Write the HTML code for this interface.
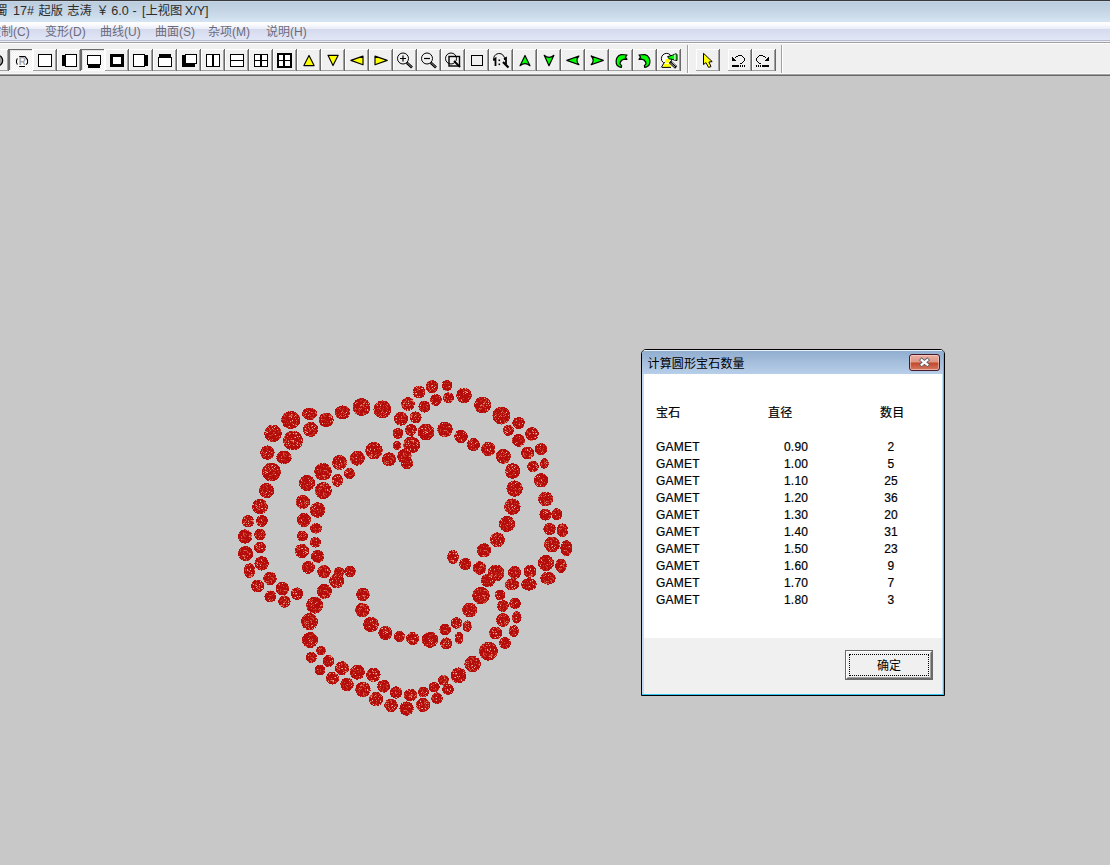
<!DOCTYPE html>
<html><head><meta charset="utf-8"><title>JewelCAD</title>
<style>
html,body{margin:0;padding:0;}
body{width:1110px;height:865px;overflow:hidden;background:#c8c8c8;position:relative;font-family:"Liberation Sans","Noto Sans CJK SC",sans-serif;}
.abs{position:absolute;}
#title{left:0;top:0;width:1110px;height:22px;background:linear-gradient(#bbccdc 2px,#c4d4e4 10px,#d6e4f2 22px);}
#title .top{left:0;top:0;width:1110px;height:1px;background:#3a3a3a;}
#title .top2{left:0;top:1px;width:1110px;height:1px;background:#c5d5e7;}
#title .txt span{position:absolute;top:0}
#title .txt{left:0;top:2.5px;font-size:13px;line-height:17px;color:#2c2c2c;white-space:pre;}
#menu{left:0;top:22px;width:1110px;height:20px;background:linear-gradient(#fff 0,#fdfdff 2px,#e9ecf7 7px,#d5d9ed 7px,#e2e7f7 18px,#b5bcd1 18px,#b5bcd1 19px,#f0f0f4 19px);}
#menu span{position:absolute;top:2px;font-size:12px;line-height:17px;color:#6b6b7b;white-space:pre;}
#tb{left:0;top:42px;width:1110px;height:34px;background:#f0f0f0;}
#tb i{position:absolute;left:0;width:1110px;height:1px;}
#dlg{left:641px;top:349px;width:304px;height:347px;box-sizing:border-box;border:1px solid #000;border-radius:5px 5px 0 0;background:#fff;overflow:hidden;}
#dlg .tbar{left:0;top:0;width:302px;height:24px;background:linear-gradient(#92aecf 0,#a2bcda 10px,#b9d0ea 24px);border-top:1px solid #e8f0f8;box-sizing:border-box;}
#dlg .ttl{left:5.5px;top:5.5px;letter-spacing:.15px;font-size:12px;line-height:16px;color:#000;white-space:pre;}
#dlg .fl{left:0;top:24px;width:2px;height:321px;background:#c3d9f0;}
#dlg .fr{left:300px;top:24px;width:1px;height:321px;background:#bfe3f8;}
#dlg .fr2{left:301px;top:1px;width:1px;height:344px;background:#35c3f2;}
#dlg .fb{left:0;top:344px;width:302px;height:1px;background:#35c3f2;}
#dlg .foot{left:2px;top:288px;width:298px;height:56px;background:#f0f0f0;}
#dlg .t{position:absolute;letter-spacing:.2px;-webkit-text-stroke:.2px #000;font-size:12px;line-height:16px;color:#000;white-space:pre;}
#cls{left:267px;top:4px;width:31px;height:17px;box-sizing:border-box;border:1px solid #47182a;border-radius:3px;background:linear-gradient(#e9b0a2 0,#dd9483 7px,#c3482b 8px,#d27a62 15px);box-shadow:inset 0 0 0 1px rgba(255,220,210,.55);}
#ok{left:203px;top:300px;width:88px;height:30px;box-sizing:border-box;border:1px solid #6a6a6a;background:#f0f0f0;}
#ok .in{left:0;top:0;width:86px;height:28px;box-sizing:border-box;border:1px solid;border-color:#fff #6a6a6a #6a6a6a #fff;}
#ok .in2{left:1px;top:1px;width:84px;height:26px;box-sizing:border-box;border:1px solid;border-color:#f0f0f0 #a0a0a0 #a0a0a0 #f0f0f0;}
#ok .foc{left:3px;top:3px;width:80px;height:22px;box-sizing:border-box;border:1px dotted #000;}
#ok .lbl{left:0;top:7px;width:86px;text-align:center;font-size:12px;line-height:16px;color:#000;}
</style></head><body>
<div id="title" class="abs"><div class="abs top"></div><div class="abs top2"></div><div class="abs txt"><span style="left:-4.5px;font-size:12.2px">蜀</span><span style="left:13px;font-size:12.6px">17#</span><span style="left:38.5px;font-size:12.2px">起版</span><span style="left:67.3px;font-size:12.2px">志涛</span><span style="left:96.5px;font-size:12.2px">￥</span><span style="left:111.2px;font-size:12.6px">6.0</span><span style="left:132.5px;font-size:12.6px">-</span><span style="left:142px;font-size:12.3px">[上视图</span><span style="left:184.8px;font-size:12.6px">X/Y]</span></div></div><div id="menu" class="abs"><span style="left:-11px">控制(C)</span><span style="left:45px">变形(D)</span><span style="left:100px">曲线(U)</span><span style="left:155px">曲面(S)</span><span style="left:208px">杂项(M)</span><span style="left:266px">说明(H)</span></div><div id="tb" class="abs"><i style="top:0;background:#a0a0a0"></i><i style="top:1px;background:#fff"></i><i style="top:31px;background:#fbfbfb"></i><i style="top:32px;background:#a0a0a0"></i><i style="top:33px;background:#696969"></i></div><svg class="abs" style="left:0;top:0" width="1110" height="80" viewBox="0 0 1110 80" shape-rendering="crispEdges"><defs><pattern id="dith" width="2" height="2" patternUnits="userSpaceOnUse"><rect width="2" height="2" fill="#fff"/><rect width="1" height="1" fill="#f0f0f0"/><rect x="1" y="1" width="1" height="1" fill="#f0f0f0"/></pattern></defs><rect x="-15" y="49" width="24" height="22" fill="#f0f0f0"/><rect x="-15" y="49" width="23" height="1" fill="#fff"/><rect x="-15" y="49" width="1" height="21" fill="#fff"/><rect x="7" y="50" width="1" height="20" fill="#a0a0a0"/><rect x="8" y="49" width="1" height="22" fill="#696969"/><rect x="-15" y="70" width="23" height="1" fill="#a0a0a0"/><rect x="9" y="49" width="24" height="22" fill="url(#dith)"/><rect x="9" y="49" width="23" height="1" fill="#696969"/><rect x="9" y="49" width="1" height="21" fill="#696969"/><rect x="10" y="50" width="22" height="1" fill="#e3e3e3"/><rect x="10" y="50" width="1" height="20" fill="#e3e3e3"/><rect x="32" y="49" width="1" height="22" fill="#fff"/><rect x="9" y="70" width="24" height="1" fill="#fff"/><rect x="33" y="49" width="24" height="22" fill="#f0f0f0"/><rect x="33" y="49" width="23" height="1" fill="#fff"/><rect x="33" y="49" width="1" height="21" fill="#fff"/><rect x="55" y="50" width="1" height="20" fill="#a0a0a0"/><rect x="56" y="49" width="1" height="22" fill="#696969"/><rect x="33" y="70" width="23" height="1" fill="#a0a0a0"/><rect x="57" y="49" width="24" height="22" fill="#f0f0f0"/><rect x="57" y="49" width="23" height="1" fill="#fff"/><rect x="57" y="49" width="1" height="21" fill="#fff"/><rect x="79" y="50" width="1" height="20" fill="#a0a0a0"/><rect x="80" y="49" width="1" height="22" fill="#696969"/><rect x="57" y="70" width="23" height="1" fill="#a0a0a0"/><rect x="81" y="49" width="24" height="22" fill="url(#dith)"/><rect x="81" y="49" width="23" height="1" fill="#696969"/><rect x="81" y="49" width="1" height="21" fill="#696969"/><rect x="82" y="50" width="22" height="1" fill="#e3e3e3"/><rect x="82" y="50" width="1" height="20" fill="#e3e3e3"/><rect x="104" y="49" width="1" height="22" fill="#fff"/><rect x="81" y="70" width="24" height="1" fill="#fff"/><rect x="105" y="49" width="24" height="22" fill="#f0f0f0"/><rect x="105" y="49" width="23" height="1" fill="#fff"/><rect x="105" y="49" width="1" height="21" fill="#fff"/><rect x="127" y="50" width="1" height="20" fill="#a0a0a0"/><rect x="128" y="49" width="1" height="22" fill="#696969"/><rect x="105" y="70" width="23" height="1" fill="#a0a0a0"/><rect x="129" y="49" width="24" height="22" fill="#f0f0f0"/><rect x="129" y="49" width="23" height="1" fill="#fff"/><rect x="129" y="49" width="1" height="21" fill="#fff"/><rect x="151" y="50" width="1" height="20" fill="#a0a0a0"/><rect x="152" y="49" width="1" height="22" fill="#696969"/><rect x="129" y="70" width="23" height="1" fill="#a0a0a0"/><rect x="153" y="49" width="24" height="22" fill="#f0f0f0"/><rect x="153" y="49" width="23" height="1" fill="#fff"/><rect x="153" y="49" width="1" height="21" fill="#fff"/><rect x="175" y="50" width="1" height="20" fill="#a0a0a0"/><rect x="176" y="49" width="1" height="22" fill="#696969"/><rect x="153" y="70" width="23" height="1" fill="#a0a0a0"/><rect x="177" y="49" width="24" height="22" fill="#f0f0f0"/><rect x="177" y="49" width="23" height="1" fill="#fff"/><rect x="177" y="49" width="1" height="21" fill="#fff"/><rect x="199" y="50" width="1" height="20" fill="#a0a0a0"/><rect x="200" y="49" width="1" height="22" fill="#696969"/><rect x="177" y="70" width="23" height="1" fill="#a0a0a0"/><rect x="201" y="49" width="24" height="22" fill="#f0f0f0"/><rect x="201" y="49" width="23" height="1" fill="#fff"/><rect x="201" y="49" width="1" height="21" fill="#fff"/><rect x="223" y="50" width="1" height="20" fill="#a0a0a0"/><rect x="224" y="49" width="1" height="22" fill="#696969"/><rect x="201" y="70" width="23" height="1" fill="#a0a0a0"/><rect x="225" y="49" width="24" height="22" fill="#f0f0f0"/><rect x="225" y="49" width="23" height="1" fill="#fff"/><rect x="225" y="49" width="1" height="21" fill="#fff"/><rect x="247" y="50" width="1" height="20" fill="#a0a0a0"/><rect x="248" y="49" width="1" height="22" fill="#696969"/><rect x="225" y="70" width="23" height="1" fill="#a0a0a0"/><rect x="249" y="49" width="24" height="22" fill="#f0f0f0"/><rect x="249" y="49" width="23" height="1" fill="#fff"/><rect x="249" y="49" width="1" height="21" fill="#fff"/><rect x="271" y="50" width="1" height="20" fill="#a0a0a0"/><rect x="272" y="49" width="1" height="22" fill="#696969"/><rect x="249" y="70" width="23" height="1" fill="#a0a0a0"/><rect x="273" y="49" width="24" height="22" fill="#f0f0f0"/><rect x="273" y="49" width="23" height="1" fill="#fff"/><rect x="273" y="49" width="1" height="21" fill="#fff"/><rect x="295" y="50" width="1" height="20" fill="#a0a0a0"/><rect x="296" y="49" width="1" height="22" fill="#696969"/><rect x="273" y="70" width="23" height="1" fill="#a0a0a0"/><rect x="297" y="49" width="24" height="22" fill="#f0f0f0"/><rect x="297" y="49" width="23" height="1" fill="#fff"/><rect x="297" y="49" width="1" height="21" fill="#fff"/><rect x="319" y="50" width="1" height="20" fill="#a0a0a0"/><rect x="320" y="49" width="1" height="22" fill="#696969"/><rect x="297" y="70" width="23" height="1" fill="#a0a0a0"/><rect x="321" y="49" width="24" height="22" fill="#f0f0f0"/><rect x="321" y="49" width="23" height="1" fill="#fff"/><rect x="321" y="49" width="1" height="21" fill="#fff"/><rect x="343" y="50" width="1" height="20" fill="#a0a0a0"/><rect x="344" y="49" width="1" height="22" fill="#696969"/><rect x="321" y="70" width="23" height="1" fill="#a0a0a0"/><rect x="345" y="49" width="24" height="22" fill="#f0f0f0"/><rect x="345" y="49" width="23" height="1" fill="#fff"/><rect x="345" y="49" width="1" height="21" fill="#fff"/><rect x="367" y="50" width="1" height="20" fill="#a0a0a0"/><rect x="368" y="49" width="1" height="22" fill="#696969"/><rect x="345" y="70" width="23" height="1" fill="#a0a0a0"/><rect x="369" y="49" width="24" height="22" fill="#f0f0f0"/><rect x="369" y="49" width="23" height="1" fill="#fff"/><rect x="369" y="49" width="1" height="21" fill="#fff"/><rect x="391" y="50" width="1" height="20" fill="#a0a0a0"/><rect x="392" y="49" width="1" height="22" fill="#696969"/><rect x="369" y="70" width="23" height="1" fill="#a0a0a0"/><rect x="393" y="49" width="24" height="22" fill="#f0f0f0"/><rect x="393" y="49" width="23" height="1" fill="#fff"/><rect x="393" y="49" width="1" height="21" fill="#fff"/><rect x="415" y="50" width="1" height="20" fill="#a0a0a0"/><rect x="416" y="49" width="1" height="22" fill="#696969"/><rect x="393" y="70" width="23" height="1" fill="#a0a0a0"/><rect x="417" y="49" width="24" height="22" fill="#f0f0f0"/><rect x="417" y="49" width="23" height="1" fill="#fff"/><rect x="417" y="49" width="1" height="21" fill="#fff"/><rect x="439" y="50" width="1" height="20" fill="#a0a0a0"/><rect x="440" y="49" width="1" height="22" fill="#696969"/><rect x="417" y="70" width="23" height="1" fill="#a0a0a0"/><rect x="441" y="49" width="24" height="22" fill="#f0f0f0"/><rect x="441" y="49" width="23" height="1" fill="#fff"/><rect x="441" y="49" width="1" height="21" fill="#fff"/><rect x="463" y="50" width="1" height="20" fill="#a0a0a0"/><rect x="464" y="49" width="1" height="22" fill="#696969"/><rect x="441" y="70" width="23" height="1" fill="#a0a0a0"/><rect x="465" y="49" width="24" height="22" fill="#f0f0f0"/><rect x="465" y="49" width="23" height="1" fill="#fff"/><rect x="465" y="49" width="1" height="21" fill="#fff"/><rect x="487" y="50" width="1" height="20" fill="#a0a0a0"/><rect x="488" y="49" width="1" height="22" fill="#696969"/><rect x="465" y="70" width="23" height="1" fill="#a0a0a0"/><rect x="489" y="49" width="24" height="22" fill="#f0f0f0"/><rect x="489" y="49" width="23" height="1" fill="#fff"/><rect x="489" y="49" width="1" height="21" fill="#fff"/><rect x="511" y="50" width="1" height="20" fill="#a0a0a0"/><rect x="512" y="49" width="1" height="22" fill="#696969"/><rect x="489" y="70" width="23" height="1" fill="#a0a0a0"/><rect x="513" y="49" width="24" height="22" fill="#f0f0f0"/><rect x="513" y="49" width="23" height="1" fill="#fff"/><rect x="513" y="49" width="1" height="21" fill="#fff"/><rect x="535" y="50" width="1" height="20" fill="#a0a0a0"/><rect x="536" y="49" width="1" height="22" fill="#696969"/><rect x="513" y="70" width="23" height="1" fill="#a0a0a0"/><rect x="537" y="49" width="24" height="22" fill="#f0f0f0"/><rect x="537" y="49" width="23" height="1" fill="#fff"/><rect x="537" y="49" width="1" height="21" fill="#fff"/><rect x="559" y="50" width="1" height="20" fill="#a0a0a0"/><rect x="560" y="49" width="1" height="22" fill="#696969"/><rect x="537" y="70" width="23" height="1" fill="#a0a0a0"/><rect x="561" y="49" width="24" height="22" fill="#f0f0f0"/><rect x="561" y="49" width="23" height="1" fill="#fff"/><rect x="561" y="49" width="1" height="21" fill="#fff"/><rect x="583" y="50" width="1" height="20" fill="#a0a0a0"/><rect x="584" y="49" width="1" height="22" fill="#696969"/><rect x="561" y="70" width="23" height="1" fill="#a0a0a0"/><rect x="585" y="49" width="24" height="22" fill="#f0f0f0"/><rect x="585" y="49" width="23" height="1" fill="#fff"/><rect x="585" y="49" width="1" height="21" fill="#fff"/><rect x="607" y="50" width="1" height="20" fill="#a0a0a0"/><rect x="608" y="49" width="1" height="22" fill="#696969"/><rect x="585" y="70" width="23" height="1" fill="#a0a0a0"/><rect x="609" y="49" width="24" height="22" fill="#f0f0f0"/><rect x="609" y="49" width="23" height="1" fill="#fff"/><rect x="609" y="49" width="1" height="21" fill="#fff"/><rect x="631" y="50" width="1" height="20" fill="#a0a0a0"/><rect x="632" y="49" width="1" height="22" fill="#696969"/><rect x="609" y="70" width="23" height="1" fill="#a0a0a0"/><rect x="633" y="49" width="24" height="22" fill="#f0f0f0"/><rect x="633" y="49" width="23" height="1" fill="#fff"/><rect x="633" y="49" width="1" height="21" fill="#fff"/><rect x="655" y="50" width="1" height="20" fill="#a0a0a0"/><rect x="656" y="49" width="1" height="22" fill="#696969"/><rect x="633" y="70" width="23" height="1" fill="#a0a0a0"/><rect x="657" y="49" width="24" height="22" fill="#f0f0f0"/><rect x="657" y="49" width="23" height="1" fill="#fff"/><rect x="657" y="49" width="1" height="21" fill="#fff"/><rect x="679" y="50" width="1" height="20" fill="#a0a0a0"/><rect x="680" y="49" width="1" height="22" fill="#696969"/><rect x="657" y="70" width="23" height="1" fill="#a0a0a0"/><rect x="696" y="49" width="24" height="22" fill="#f0f0f0"/><rect x="696" y="49" width="23" height="1" fill="#fff"/><rect x="696" y="49" width="1" height="21" fill="#fff"/><rect x="718" y="50" width="1" height="20" fill="#a0a0a0"/><rect x="719" y="49" width="1" height="22" fill="#696969"/><rect x="696" y="70" width="23" height="1" fill="#a0a0a0"/><rect x="728" y="49" width="24" height="22" fill="#f0f0f0"/><rect x="728" y="49" width="23" height="1" fill="#fff"/><rect x="728" y="49" width="1" height="21" fill="#fff"/><rect x="750" y="50" width="1" height="20" fill="#a0a0a0"/><rect x="751" y="49" width="1" height="22" fill="#696969"/><rect x="728" y="70" width="23" height="1" fill="#a0a0a0"/><rect x="752" y="49" width="24" height="22" fill="#f0f0f0"/><rect x="752" y="49" width="23" height="1" fill="#fff"/><rect x="752" y="49" width="1" height="21" fill="#fff"/><rect x="774" y="50" width="1" height="20" fill="#a0a0a0"/><rect x="775" y="49" width="1" height="22" fill="#696969"/><rect x="752" y="70" width="23" height="1" fill="#a0a0a0"/><rect x="687" y="45" width="1" height="28" fill="#a0a0a0"/><rect x="688" y="45" width="1" height="28" fill="#fff"/><rect x="781" y="45" width="1" height="28" fill="#a0a0a0"/><rect x="782" y="45" width="1" height="28" fill="#fff"/><circle cx="-2.6" cy="60.5" r="5.3" fill="#a0a0a0" stroke="#000" stroke-width="1.2" shape-rendering="auto"/><g shape-rendering="auto"><ellipse cx="22" cy="61.5" rx="5.4" ry="5" fill="#fff"/><path d="M19.2 56.5 H25 L27.5 59.8 V63 L26.2 64.6 M25 66.5 H19.2 M17.4 58.4 L16.5 60.5 V62.5 L17.4 64.6" fill="none" stroke="#000" stroke-width="1.1"/></g><rect x="38" y="54" width="14" height="13" fill="#000"/><rect x="39" y="55" width="12" height="11" fill="#fff"/><rect x="62" y="55" width="4" height="11" fill="#000"/><rect x="65" y="54" width="12" height="13" fill="#000"/><rect x="66" y="55" width="10" height="11" fill="#fff"/><rect x="88" y="64" width="12" height="4" fill="#000"/><rect x="87" y="55" width="14" height="10" fill="#000"/><rect x="88" y="56" width="12" height="8" fill="#fff"/><rect x="110" y="54" width="14" height="13" fill="#000"/><rect x="113" y="57" width="8" height="7" fill="#fff"/><rect x="144" y="55" width="4" height="11" fill="#000"/><rect x="133" y="54" width="12" height="13" fill="#000"/><rect x="134" y="55" width="10" height="11" fill="#fff"/><rect x="159" y="54" width="12" height="4" fill="#000"/><rect x="158" y="57" width="14" height="10" fill="#000"/><rect x="159" y="58" width="12" height="8" fill="#fff"/><rect x="182" y="55" width="13" height="12" fill="#000"/><rect x="185" y="54" width="12" height="10" fill="#000"/><rect x="186" y="55" width="10" height="8" fill="#fff"/><rect x="206" y="54" width="14" height="13" fill="#000"/><rect x="207" y="55" width="12" height="11" fill="#fff"/><rect x="212" y="54" width="2" height="13" fill="#000"/><rect x="230" y="54" width="14" height="13" fill="#000"/><rect x="231" y="55" width="12" height="11" fill="#fff"/><rect x="230" y="60" width="14" height="1" fill="#000"/><rect x="254" y="54" width="14" height="13" fill="#000"/><rect x="255" y="55" width="12" height="11" fill="#fff"/><rect x="260" y="54" width="2" height="13" fill="#000"/><rect x="254" y="60" width="14" height="1" fill="#000"/><rect x="277" y="53" width="15" height="15" fill="#000"/><rect x="279" y="55" width="11" height="11" fill="#fff"/><rect x="283" y="53" width="2" height="15" fill="#000"/><rect x="277" y="60" width="15" height="1" fill="#000"/><polygon shape-rendering="auto" points="309,55.4 314.1,65.6 303.9,65.6" fill="#ffff00" stroke="#000" stroke-width="1.15" stroke-linejoin="round"/><polygon shape-rendering="auto" points="328,55.3 338.2,55.3 333,65.6" fill="#ffff00" stroke="#000" stroke-width="1.15" stroke-linejoin="round"/><polygon shape-rendering="auto" points="350.9,60.4 363,56.1 363,64.8" fill="#ffff00" stroke="#000" stroke-width="1.15" stroke-linejoin="round"/><polygon shape-rendering="auto" points="375,56.1 375,64.8 387.2,60.4" fill="#ffff00" stroke="#000" stroke-width="1.15" stroke-linejoin="round"/><g shape-rendering="auto"><circle cx="403" cy="58.5" r="5.5" fill="none" stroke="#000" stroke-width="1"/><path d="M406.8 62.7 L412 67.5" stroke="#000" stroke-width="2.6"/><path d="M407.4 62.9 L411.6 67.1" stroke="#bbb" stroke-width=".8"/><path d="M400 58.5 H406 M403 55.5 V61.5" stroke="#000" stroke-width="1.2"/></g><g shape-rendering="auto"><circle cx="427" cy="58.5" r="5.5" fill="none" stroke="#000" stroke-width="1"/><path d="M430.8 62.7 L436 67.5" stroke="#000" stroke-width="2.6"/><path d="M431.4 62.9 L435.6 67.1" stroke="#bbb" stroke-width=".8"/><path d="M424 58.5 H430" stroke="#000" stroke-width="1.2"/></g><g shape-rendering="auto"><circle cx="451" cy="58.5" r="5.5" fill="none" stroke="#000" stroke-width="1"/><rect x="449" y="56.5" width="10.5" height="9.5" fill="none" stroke="#000" stroke-width="1.4"/><path d="M454 61 L460 67" stroke="#000" stroke-width="1.8"/></g><rect x="471" y="55" width="12" height="11" fill="#000"/><rect x="472" y="56" width="10" height="9" fill="#f0f0f0"/><g shape-rendering="auto"><path d="M494 61 A5.5 5.5 0 1 1 504.5 60" fill="none" stroke="#000" stroke-width="1"/><path d="M503 62 L508.5 67.5" stroke="#000" stroke-width="2.2"/><path d="M493.5 60 L495.5 58.5 V66 M504 59 L506 58 V64" stroke="#000" stroke-width="1.8" fill="none"/><rect x="498.5" y="59.5" width="1.6" height="1.6" fill="#000"/><rect x="498.5" y="63.5" width="1.6" height="1.6" fill="#000"/></g><path shape-rendering="auto" d="M525 55.4 L530 65.7 Q525 61.6 520 65.7 Z" fill="#00ff00" stroke="#000" stroke-width="1.15" stroke-linejoin="round"/><path shape-rendering="auto" d="M544.2 55.3 Q549 59.4 553.9 55.3 L549 65.7 Z" fill="#00ff00" stroke="#000" stroke-width="1.15" stroke-linejoin="round"/><path shape-rendering="auto" d="M566.8 60.4 L578.9 56 Q575 60.4 578.9 64.7 Z" fill="#00ff00" stroke="#000" stroke-width="1.15" stroke-linejoin="round"/><path shape-rendering="auto" d="M591.2 56 L603.3 60.4 L591.2 64.7 Q595.2 60.4 591.2 56 Z" fill="#00ff00" stroke="#000" stroke-width="1.15" stroke-linejoin="round"/><polygon shape-rendering="auto" points="627.0,55.0 621.3,54.5 618.8,55.6 616.9,57.8 616.2,60.2 616.2,63.0 617.2,65.5 619.2,66.8 621.3,67.3 621.6,65.6 620.0,63.9 620.3,62.0 622.0,60.0 624.4,59.1 627.0,59.3 625.4,57.2" fill="#00ff00" stroke="#000" stroke-width="1.2" stroke-linejoin="round"/><polygon shape-rendering="auto" points="639.0,55.0 644.7,54.5 647.2,55.6 649.1,57.8 649.8,60.2 649.8,63.0 648.8,65.5 646.8,66.8 644.7,67.3 644.4,65.6 646.0,63.9 645.7,62.0 644.0,60.0 641.6,59.1 639.0,59.3 640.6,57.2" fill="#00ff00" stroke="#000" stroke-width="1.2" stroke-linejoin="round"/><g shape-rendering="auto"><circle cx="666.6" cy="58.6" r="5.2" fill="#fff" stroke="#000" stroke-width="1"/><polygon points="665.8,59 668.8,59 670.8,67 662.6,67" fill="#ffff00"/><rect x="663" y="62.8" width="8" height="1" fill="#fff"/><path d="M661.3 67.4 L664.6 62 M662 67.4 H671" stroke="#000" stroke-width="1" fill="none"/><polygon points="667.6,56.6 672.5,55.2 675.6,53.8 677,54.4 677,60.6 675.2,60.2 672.2,59.4 669,58.8" fill="#00ff00" stroke="#000" stroke-width="1"/><rect x="674.3" y="54.5" width="1" height="5.5" fill="#fff"/><path d="M670 61.8 L676.2 67.4" stroke="#000" stroke-width="3.4"/><path d="M670.3 62.9 L675 67.2 M671.6 61.8 L676.4 66.2" stroke="#fff" stroke-width=".7"/></g><polygon shape-rendering="auto" points="703.5,53.3 703.5,64.6 705.9,62.6 708.5,67.4 711,66.6 708.9,62 712.2,61.6" fill="#ffff00" stroke="#000" stroke-width="1" stroke-linejoin="miter"/><rect x="732" y="57" width="1" height="1" fill="#000"/><rect x="732" y="58" width="2" height="1" fill="#000"/><rect x="732" y="59" width="3" height="1" fill="#000"/><rect x="732" y="60" width="4" height="1" fill="#000"/><rect x="735" y="57" width="1" height="1" fill="#000"/><rect x="736" y="56" width="2" height="1" fill="#000"/><rect x="738" y="55" width="4" height="1" fill="#000"/><rect x="742" y="56" width="1" height="1" fill="#000"/><rect x="743" y="57" width="1" height="1" fill="#000"/><rect x="744" y="58" width="1" height="1" fill="#000"/><rect x="744" y="59" width="1" height="1" fill="#000"/><rect x="744" y="60" width="1" height="1" fill="#000"/><rect x="743" y="61" width="1" height="1" fill="#000"/><rect x="742" y="62" width="1" height="1" fill="#000"/><rect x="740" y="63" width="2" height="1" fill="#000"/><rect x="732" y="65" width="7" height="1" fill="#000"/><rect x="732" y="66" width="7" height="1" fill="#000"/><rect x="740" y="65" width="1" height="1" fill="#000"/><rect x="740" y="66" width="1" height="1" fill="#000"/><rect x="742" y="65" width="1" height="1" fill="#000"/><rect x="742" y="66" width="1" height="1" fill="#000"/><rect x="744" y="65" width="1" height="1" fill="#000"/><rect x="744" y="66" width="1" height="1" fill="#000"/><rect x="768" y="57" width="1" height="1" fill="#000"/><rect x="767" y="58" width="2" height="1" fill="#000"/><rect x="766" y="59" width="3" height="1" fill="#000"/><rect x="765" y="60" width="4" height="1" fill="#000"/><rect x="765" y="57" width="1" height="1" fill="#000"/><rect x="763" y="56" width="2" height="1" fill="#000"/><rect x="759" y="55" width="4" height="1" fill="#000"/><rect x="758" y="56" width="1" height="1" fill="#000"/><rect x="757" y="57" width="1" height="1" fill="#000"/><rect x="756" y="58" width="1" height="1" fill="#000"/><rect x="756" y="59" width="1" height="1" fill="#000"/><rect x="756" y="60" width="1" height="1" fill="#000"/><rect x="757" y="61" width="1" height="1" fill="#000"/><rect x="758" y="62" width="1" height="1" fill="#000"/><rect x="759" y="63" width="2" height="1" fill="#000"/><rect x="762" y="65" width="7" height="1" fill="#000"/><rect x="762" y="66" width="7" height="1" fill="#000"/><rect x="760" y="65" width="1" height="1" fill="#000"/><rect x="760" y="66" width="1" height="1" fill="#000"/><rect x="758" y="65" width="1" height="1" fill="#000"/><rect x="758" y="66" width="1" height="1" fill="#000"/><rect x="756" y="65" width="1" height="1" fill="#000"/><rect x="756" y="66" width="1" height="1" fill="#000"/><text x="22.3" y="65.2" font-family="Liberation Sans, sans-serif" font-size="10" font-weight="bold" fill="#a4a4a4" text-anchor="middle" shape-rendering="auto">R</text></svg><svg class="abs" style="left:0;top:76px" width="640" height="789" viewBox="0 76 640 789" shape-rendering="crispEdges"><defs><pattern id="sp" width="40" height="40" patternUnits="userSpaceOnUse"><rect width="40" height="40" fill="#b50d0b"/><rect x="20" y="9" width="1" height="1" fill="#c84a30"/><rect x="3" y="4" width="1" height="1" fill="#be2a1c"/><rect x="6" y="23" width="1" height="1" fill="#c43a28"/><rect x="3" y="32" width="1" height="1" fill="#c23222"/><rect x="2" y="5" width="1" height="1" fill="#c84a30"/><rect x="26" y="4" width="1" height="1" fill="#c23222"/><rect x="5" y="35" width="1" height="1" fill="#c84a30"/><rect x="3" y="36" width="1" height="1" fill="#c8402e"/><rect x="14" y="37" width="1" height="1" fill="#d0604a"/><rect x="36" y="37" width="1" height="1" fill="#c84a30"/><rect x="3" y="14" width="1" height="1" fill="#d0604a"/><rect x="35" y="8" width="1" height="1" fill="#d87a62"/><rect x="26" y="9" width="1" height="1" fill="#be2a1c"/><rect x="7" y="36" width="1" height="1" fill="#d87a62"/><rect x="35" y="11" width="1" height="1" fill="#c8402e"/><rect x="37" y="36" width="1" height="1" fill="#c23222"/><rect x="23" y="6" width="1" height="1" fill="#be2a1c"/><rect x="4" y="36" width="1" height="1" fill="#d0604a"/><rect x="39" y="13" width="1" height="1" fill="#cc5038"/><rect x="34" y="27" width="1" height="1" fill="#ecc0b0"/><rect x="29" y="37" width="1" height="1" fill="#cc5038"/><rect x="23" y="19" width="1" height="1" fill="#c23222"/><rect x="11" y="15" width="1" height="1" fill="#c8402e"/><rect x="36" y="19" width="1" height="1" fill="#be2a1c"/><rect x="31" y="21" width="1" height="1" fill="#cc5038"/><rect x="18" y="38" width="1" height="1" fill="#c8402e"/><rect x="7" y="32" width="1" height="1" fill="#c84a30"/><rect x="10" y="21" width="1" height="1" fill="#e09a84"/><rect x="31" y="26" width="1" height="1" fill="#d0604a"/><rect x="4" y="35" width="1" height="1" fill="#c43a28"/><rect x="20" y="21" width="1" height="1" fill="#ecc0b0"/><rect x="38" y="31" width="1" height="1" fill="#c43a28"/><rect x="29" y="4" width="1" height="1" fill="#c8402e"/><rect x="17" y="30" width="1" height="1" fill="#c8402e"/><rect x="3" y="19" width="1" height="1" fill="#c43a28"/><rect x="28" y="18" width="1" height="1" fill="#c84a30"/><rect x="22" y="1" width="1" height="1" fill="#cc5038"/><rect x="22" y="10" width="1" height="1" fill="#c43a28"/><rect x="7" y="31" width="1" height="1" fill="#d0604a"/><rect x="13" y="18" width="1" height="1" fill="#e09a84"/><rect x="15" y="25" width="1" height="1" fill="#c84a30"/><rect x="31" y="5" width="1" height="1" fill="#e09a84"/><rect x="28" y="25" width="1" height="1" fill="#be2a1c"/><rect x="17" y="8" width="1" height="1" fill="#c84a30"/><rect x="35" y="17" width="1" height="1" fill="#c84a30"/><rect x="22" y="24" width="1" height="1" fill="#c23222"/><rect x="9" y="5" width="1" height="1" fill="#e09a84"/><rect x="9" y="14" width="1" height="1" fill="#c23222"/><rect x="0" y="31" width="1" height="1" fill="#c43a28"/><rect x="11" y="16" width="1" height="1" fill="#d87a62"/><rect x="0" y="9" width="1" height="1" fill="#c84a30"/><rect x="34" y="23" width="1" height="1" fill="#c43a28"/><rect x="36" y="20" width="1" height="1" fill="#e09a84"/><rect x="32" y="39" width="1" height="1" fill="#d0604a"/><rect x="29" y="35" width="1" height="1" fill="#c84a30"/><rect x="25" y="25" width="1" height="1" fill="#c84a30"/><rect x="6" y="30" width="1" height="1" fill="#c84a30"/><rect x="3" y="12" width="1" height="1" fill="#c8402e"/><rect x="13" y="28" width="1" height="1" fill="#e09a84"/><rect x="7" y="21" width="1" height="1" fill="#c43a28"/><rect x="3" y="6" width="1" height="1" fill="#d0604a"/><rect x="36" y="9" width="1" height="1" fill="#be2a1c"/><rect x="6" y="23" width="1" height="1" fill="#c43a28"/><rect x="1" y="4" width="1" height="1" fill="#c23222"/><rect x="39" y="24" width="1" height="1" fill="#e09a84"/><rect x="16" y="22" width="1" height="1" fill="#c43a28"/><rect x="23" y="30" width="1" height="1" fill="#c8402e"/><rect x="7" y="31" width="1" height="1" fill="#cc5038"/><rect x="30" y="30" width="1" height="1" fill="#d87a62"/><rect x="5" y="9" width="1" height="1" fill="#c8402e"/><rect x="21" y="16" width="1" height="1" fill="#cc5038"/><rect x="10" y="33" width="1" height="1" fill="#d0604a"/><rect x="13" y="33" width="1" height="1" fill="#ecc0b0"/><rect x="9" y="34" width="1" height="1" fill="#d0604a"/><rect x="33" y="19" width="1" height="1" fill="#c8402e"/><rect x="16" y="33" width="1" height="1" fill="#ecc0b0"/><rect x="10" y="22" width="1" height="1" fill="#c23222"/><rect x="34" y="34" width="1" height="1" fill="#be2a1c"/><rect x="21" y="14" width="1" height="1" fill="#c43a28"/><rect x="12" y="15" width="1" height="1" fill="#c84a30"/><rect x="14" y="12" width="1" height="1" fill="#be2a1c"/><rect x="31" y="22" width="1" height="1" fill="#d0604a"/><rect x="1" y="17" width="1" height="1" fill="#cc5038"/><rect x="16" y="12" width="1" height="1" fill="#c43a28"/><rect x="22" y="28" width="1" height="1" fill="#ecc0b0"/><rect x="23" y="5" width="1" height="1" fill="#c23222"/><rect x="6" y="14" width="1" height="1" fill="#cc5038"/><rect x="12" y="21" width="1" height="1" fill="#c23222"/><rect x="30" y="39" width="1" height="1" fill="#c43a28"/><rect x="0" y="30" width="1" height="1" fill="#ecc0b0"/><rect x="5" y="7" width="1" height="1" fill="#c84a30"/><rect x="12" y="30" width="1" height="1" fill="#e09a84"/><rect x="27" y="21" width="1" height="1" fill="#c8402e"/><rect x="25" y="29" width="1" height="1" fill="#c84a30"/><rect x="5" y="10" width="1" height="1" fill="#e09a84"/><rect x="8" y="1" width="1" height="1" fill="#e09a84"/><rect x="37" y="29" width="1" height="1" fill="#e09a84"/><rect x="39" y="38" width="1" height="1" fill="#cc5038"/><rect x="22" y="9" width="1" height="1" fill="#be2a1c"/><rect x="35" y="8" width="1" height="1" fill="#d0604a"/><rect x="0" y="6" width="1" height="1" fill="#be2a1c"/><rect x="8" y="27" width="1" height="1" fill="#c23222"/><rect x="13" y="1" width="1" height="1" fill="#d87a62"/><rect x="13" y="18" width="1" height="1" fill="#be2a1c"/><rect x="15" y="37" width="1" height="1" fill="#ecc0b0"/><rect x="16" y="34" width="1" height="1" fill="#c84a30"/><rect x="8" y="3" width="1" height="1" fill="#ecc0b0"/><rect x="29" y="37" width="1" height="1" fill="#be2a1c"/><rect x="26" y="32" width="1" height="1" fill="#e09a84"/><rect x="34" y="9" width="1" height="1" fill="#be2a1c"/><rect x="32" y="1" width="1" height="1" fill="#cc5038"/><rect x="11" y="38" width="1" height="1" fill="#d0604a"/><rect x="9" y="11" width="1" height="1" fill="#e09a84"/><rect x="30" y="39" width="1" height="1" fill="#c8402e"/><rect x="35" y="3" width="1" height="1" fill="#ecc0b0"/><rect x="33" y="33" width="1" height="1" fill="#be2a1c"/><rect x="30" y="6" width="1" height="1" fill="#be2a1c"/><rect x="3" y="15" width="1" height="1" fill="#c23222"/><rect x="17" y="2" width="1" height="1" fill="#c8402e"/><rect x="32" y="28" width="1" height="1" fill="#be2a1c"/><rect x="1" y="4" width="1" height="1" fill="#cc5038"/><rect x="20" y="39" width="1" height="1" fill="#be2a1c"/><rect x="38" y="32" width="1" height="1" fill="#c23222"/><rect x="17" y="28" width="1" height="1" fill="#be2a1c"/><rect x="34" y="30" width="1" height="1" fill="#be2a1c"/><rect x="15" y="33" width="1" height="1" fill="#d87a62"/><rect x="35" y="12" width="1" height="1" fill="#cc5038"/><rect x="8" y="26" width="1" height="1" fill="#c8402e"/><rect x="25" y="28" width="1" height="1" fill="#ecc0b0"/><rect x="4" y="15" width="1" height="1" fill="#c84a30"/><rect x="4" y="13" width="1" height="1" fill="#d87a62"/><rect x="7" y="9" width="1" height="1" fill="#ecc0b0"/><rect x="9" y="16" width="1" height="1" fill="#e09a84"/><rect x="29" y="14" width="1" height="1" fill="#c8402e"/><rect x="25" y="31" width="1" height="1" fill="#e09a84"/><rect x="14" y="10" width="1" height="1" fill="#c84a30"/><rect x="32" y="25" width="1" height="1" fill="#ecc0b0"/><rect x="26" y="12" width="1" height="1" fill="#ecc0b0"/><rect x="20" y="5" width="1" height="1" fill="#ecc0b0"/><rect x="1" y="21" width="1" height="1" fill="#be2a1c"/><rect x="29" y="28" width="1" height="1" fill="#d0604a"/><rect x="24" y="21" width="1" height="1" fill="#be2a1c"/><rect x="39" y="18" width="1" height="1" fill="#be2a1c"/><rect x="4" y="7" width="1" height="1" fill="#c23222"/><rect x="6" y="5" width="1" height="1" fill="#d87a62"/><rect x="17" y="2" width="1" height="1" fill="#e09a84"/><rect x="17" y="8" width="1" height="1" fill="#c84a30"/><rect x="16" y="25" width="1" height="1" fill="#e09a84"/><rect x="34" y="32" width="1" height="1" fill="#c43a28"/><rect x="31" y="20" width="1" height="1" fill="#c8402e"/><rect x="17" y="3" width="1" height="1" fill="#e09a84"/><rect x="27" y="4" width="1" height="1" fill="#d87a62"/><rect x="1" y="5" width="1" height="1" fill="#d87a62"/><rect x="5" y="38" width="1" height="1" fill="#c23222"/><rect x="4" y="16" width="1" height="1" fill="#c8402e"/><rect x="29" y="0" width="1" height="1" fill="#ecc0b0"/><rect x="35" y="26" width="1" height="1" fill="#d87a62"/><rect x="39" y="8" width="1" height="1" fill="#d0604a"/><rect x="33" y="15" width="1" height="1" fill="#c8402e"/><rect x="10" y="16" width="1" height="1" fill="#d0604a"/><rect x="11" y="12" width="1" height="1" fill="#d87a62"/><rect x="19" y="33" width="1" height="1" fill="#c23222"/><rect x="18" y="28" width="1" height="1" fill="#be2a1c"/><rect x="11" y="17" width="1" height="1" fill="#ecc0b0"/><rect x="1" y="16" width="1" height="1" fill="#d0604a"/><rect x="0" y="1" width="1" height="1" fill="#be2a1c"/><rect x="35" y="12" width="1" height="1" fill="#be2a1c"/><rect x="30" y="15" width="1" height="1" fill="#cc5038"/><rect x="6" y="27" width="1" height="1" fill="#cc5038"/><rect x="34" y="25" width="1" height="1" fill="#be2a1c"/><rect x="19" y="13" width="1" height="1" fill="#c23222"/><rect x="21" y="12" width="1" height="1" fill="#e09a84"/><rect x="25" y="22" width="1" height="1" fill="#d0604a"/><rect x="8" y="0" width="1" height="1" fill="#c8402e"/><rect x="16" y="27" width="1" height="1" fill="#e09a84"/><rect x="3" y="5" width="1" height="1" fill="#c84a30"/><rect x="32" y="18" width="1" height="1" fill="#c43a28"/><rect x="15" y="18" width="1" height="1" fill="#d0604a"/><rect x="29" y="11" width="1" height="1" fill="#e09a84"/><rect x="17" y="28" width="1" height="1" fill="#d0604a"/><rect x="16" y="23" width="1" height="1" fill="#ecc0b0"/><rect x="35" y="20" width="1" height="1" fill="#c23222"/><rect x="2" y="19" width="1" height="1" fill="#c23222"/><rect x="22" y="11" width="1" height="1" fill="#d0604a"/><rect x="21" y="24" width="1" height="1" fill="#c8402e"/><rect x="30" y="17" width="1" height="1" fill="#be2a1c"/><rect x="12" y="15" width="1" height="1" fill="#be2a1c"/><rect x="0" y="5" width="1" height="1" fill="#d87a62"/><rect x="5" y="9" width="1" height="1" fill="#c84a30"/><rect x="37" y="2" width="1" height="1" fill="#c84a30"/><rect x="1" y="19" width="1" height="1" fill="#d87a62"/><rect x="14" y="5" width="1" height="1" fill="#c43a28"/><rect x="33" y="9" width="1" height="1" fill="#c43a28"/><rect x="24" y="20" width="1" height="1" fill="#cc5038"/><rect x="9" y="18" width="1" height="1" fill="#c43a28"/><rect x="9" y="2" width="1" height="1" fill="#be2a1c"/><rect x="27" y="32" width="1" height="1" fill="#e09a84"/><rect x="33" y="32" width="1" height="1" fill="#c43a28"/><rect x="1" y="37" width="1" height="1" fill="#c23222"/><rect x="5" y="1" width="1" height="1" fill="#d0604a"/><rect x="8" y="23" width="1" height="1" fill="#c8402e"/><rect x="24" y="28" width="1" height="1" fill="#be2a1c"/><rect x="3" y="1" width="1" height="1" fill="#be2a1c"/><rect x="15" y="31" width="1" height="1" fill="#d87a62"/><rect x="0" y="29" width="1" height="1" fill="#c8402e"/><rect x="32" y="34" width="1" height="1" fill="#c8402e"/><rect x="33" y="4" width="1" height="1" fill="#cc5038"/><rect x="16" y="4" width="1" height="1" fill="#d87a62"/><rect x="15" y="13" width="1" height="1" fill="#c23222"/><rect x="29" y="31" width="1" height="1" fill="#c84a30"/><rect x="4" y="30" width="1" height="1" fill="#d87a62"/><rect x="2" y="39" width="1" height="1" fill="#c23222"/><rect x="4" y="38" width="1" height="1" fill="#e09a84"/><rect x="21" y="16" width="1" height="1" fill="#d87a62"/><rect x="39" y="36" width="1" height="1" fill="#e09a84"/><rect x="0" y="30" width="1" height="1" fill="#d0604a"/><rect x="31" y="17" width="1" height="1" fill="#c8402e"/><rect x="13" y="31" width="1" height="1" fill="#d87a62"/><rect x="33" y="18" width="1" height="1" fill="#cc5038"/><rect x="29" y="29" width="1" height="1" fill="#c8402e"/><rect x="35" y="12" width="1" height="1" fill="#d87a62"/><rect x="5" y="30" width="1" height="1" fill="#d0604a"/><rect x="18" y="29" width="1" height="1" fill="#c8402e"/><rect x="32" y="28" width="1" height="1" fill="#d87a62"/><rect x="24" y="13" width="1" height="1" fill="#c23222"/><rect x="4" y="37" width="1" height="1" fill="#c8402e"/><rect x="9" y="33" width="1" height="1" fill="#d87a62"/><rect x="23" y="8" width="1" height="1" fill="#c43a28"/><rect x="32" y="17" width="1" height="1" fill="#c8402e"/><rect x="23" y="14" width="1" height="1" fill="#cc5038"/><rect x="31" y="25" width="1" height="1" fill="#d0604a"/><rect x="10" y="0" width="1" height="1" fill="#cc5038"/><rect x="28" y="25" width="1" height="1" fill="#d87a62"/><rect x="9" y="26" width="1" height="1" fill="#ecc0b0"/><rect x="24" y="20" width="1" height="1" fill="#c8402e"/><rect x="21" y="0" width="1" height="1" fill="#ecc0b0"/><rect x="21" y="25" width="1" height="1" fill="#c8402e"/><rect x="12" y="0" width="1" height="1" fill="#d87a62"/><rect x="16" y="23" width="1" height="1" fill="#c8402e"/><rect x="25" y="24" width="1" height="1" fill="#c43a28"/><rect x="4" y="23" width="1" height="1" fill="#c84a30"/><rect x="17" y="3" width="1" height="1" fill="#d87a62"/><rect x="6" y="3" width="1" height="1" fill="#d87a62"/><rect x="9" y="15" width="1" height="1" fill="#d87a62"/><rect x="27" y="32" width="1" height="1" fill="#ecc0b0"/><rect x="12" y="23" width="1" height="1" fill="#c84a30"/><rect x="1" y="25" width="1" height="1" fill="#be2a1c"/><rect x="35" y="13" width="1" height="1" fill="#c8402e"/><rect x="3" y="26" width="1" height="1" fill="#cc5038"/><rect x="39" y="8" width="1" height="1" fill="#d87a62"/><rect x="31" y="3" width="1" height="1" fill="#be2a1c"/><rect x="8" y="10" width="1" height="1" fill="#cc5038"/><rect x="26" y="21" width="1" height="1" fill="#d87a62"/><rect x="19" y="16" width="1" height="1" fill="#d87a62"/><rect x="25" y="15" width="1" height="1" fill="#d87a62"/><rect x="30" y="35" width="1" height="1" fill="#c84a30"/><rect x="7" y="10" width="1" height="1" fill="#e09a84"/><rect x="4" y="13" width="1" height="1" fill="#be2a1c"/><rect x="31" y="35" width="1" height="1" fill="#c23222"/><rect x="28" y="21" width="1" height="1" fill="#cc5038"/><rect x="27" y="8" width="1" height="1" fill="#be2a1c"/><rect x="12" y="15" width="1" height="1" fill="#c8402e"/><rect x="11" y="21" width="1" height="1" fill="#be2a1c"/><rect x="5" y="20" width="1" height="1" fill="#c23222"/><rect x="23" y="16" width="1" height="1" fill="#c43a28"/><rect x="12" y="1" width="1" height="1" fill="#c84a30"/><rect x="24" y="26" width="1" height="1" fill="#be2a1c"/><rect x="13" y="24" width="1" height="1" fill="#d87a62"/><rect x="21" y="3" width="1" height="1" fill="#cc5038"/><rect x="17" y="36" width="1" height="1" fill="#ecc0b0"/><rect x="8" y="32" width="1" height="1" fill="#be2a1c"/><rect x="13" y="5" width="1" height="1" fill="#d87a62"/><rect x="15" y="24" width="1" height="1" fill="#c84a30"/><rect x="28" y="27" width="1" height="1" fill="#d87a62"/><rect x="1" y="8" width="1" height="1" fill="#d0604a"/><rect x="27" y="30" width="1" height="1" fill="#c43a28"/><rect x="31" y="0" width="1" height="1" fill="#c8402e"/><rect x="25" y="33" width="1" height="1" fill="#cc5038"/><rect x="28" y="15" width="1" height="1" fill="#c8402e"/><rect x="14" y="9" width="1" height="1" fill="#e09a84"/><rect x="33" y="6" width="1" height="1" fill="#cc5038"/><rect x="5" y="35" width="1" height="1" fill="#d0604a"/><rect x="0" y="8" width="1" height="1" fill="#c23222"/><rect x="36" y="2" width="1" height="1" fill="#d87a62"/><rect x="8" y="16" width="1" height="1" fill="#be2a1c"/><rect x="27" y="7" width="1" height="1" fill="#c8402e"/><rect x="4" y="19" width="1" height="1" fill="#be2a1c"/><rect x="37" y="12" width="1" height="1" fill="#c84a30"/><rect x="16" y="14" width="1" height="1" fill="#c43a28"/><rect x="0" y="0" width="1" height="1" fill="#be2a1c"/><rect x="19" y="29" width="1" height="1" fill="#d87a62"/><rect x="20" y="15" width="1" height="1" fill="#cc5038"/><rect x="33" y="15" width="1" height="1" fill="#be2a1c"/><rect x="15" y="1" width="1" height="1" fill="#c84a30"/><rect x="19" y="3" width="1" height="1" fill="#d0604a"/><rect x="12" y="31" width="1" height="1" fill="#c84a30"/><rect x="5" y="16" width="1" height="1" fill="#c23222"/><rect x="27" y="23" width="1" height="1" fill="#c23222"/><rect x="31" y="2" width="1" height="1" fill="#ecc0b0"/><rect x="26" y="23" width="1" height="1" fill="#c84a30"/><rect x="12" y="0" width="1" height="1" fill="#d87a62"/><rect x="32" y="4" width="1" height="1" fill="#c23222"/><rect x="31" y="12" width="1" height="1" fill="#d87a62"/><rect x="12" y="14" width="1" height="1" fill="#cc5038"/><rect x="14" y="16" width="1" height="1" fill="#d87a62"/><rect x="6" y="39" width="1" height="1" fill="#cc5038"/><rect x="39" y="11" width="1" height="1" fill="#c23222"/><rect x="31" y="26" width="1" height="1" fill="#d0604a"/><rect x="38" y="9" width="1" height="1" fill="#c84a30"/><rect x="3" y="13" width="1" height="1" fill="#d0604a"/><rect x="38" y="9" width="1" height="1" fill="#c84a30"/><rect x="3" y="3" width="1" height="1" fill="#e09a84"/><rect x="25" y="28" width="1" height="1" fill="#ecc0b0"/><rect x="7" y="5" width="1" height="1" fill="#e09a84"/><rect x="21" y="12" width="1" height="1" fill="#e09a84"/><rect x="33" y="29" width="1" height="1" fill="#d0604a"/><rect x="19" y="24" width="1" height="1" fill="#ecc0b0"/><rect x="21" y="28" width="1" height="1" fill="#e09a84"/><rect x="6" y="0" width="1" height="1" fill="#c8402e"/><rect x="17" y="5" width="1" height="1" fill="#ecc0b0"/><rect x="26" y="7" width="1" height="1" fill="#be2a1c"/><rect x="13" y="24" width="1" height="1" fill="#ecc0b0"/><rect x="19" y="27" width="1" height="1" fill="#c8402e"/><rect x="3" y="30" width="1" height="1" fill="#c23222"/><rect x="23" y="34" width="1" height="1" fill="#cc5038"/><rect x="12" y="20" width="1" height="1" fill="#ecc0b0"/><rect x="30" y="1" width="1" height="1" fill="#c84a30"/><rect x="15" y="25" width="1" height="1" fill="#d0604a"/><rect x="24" y="2" width="1" height="1" fill="#cc5038"/><rect x="4" y="3" width="1" height="1" fill="#d87a62"/><rect x="12" y="4" width="1" height="1" fill="#c43a28"/><rect x="21" y="23" width="1" height="1" fill="#d87a62"/><rect x="21" y="39" width="1" height="1" fill="#d0604a"/><rect x="16" y="20" width="1" height="1" fill="#d87a62"/><rect x="19" y="0" width="1" height="1" fill="#c43a28"/><rect x="4" y="1" width="1" height="1" fill="#c23222"/><rect x="6" y="30" width="1" height="1" fill="#cc5038"/><rect x="24" y="16" width="1" height="1" fill="#c84a30"/><rect x="31" y="8" width="1" height="1" fill="#cc5038"/><rect x="11" y="0" width="1" height="1" fill="#d87a62"/><rect x="9" y="38" width="1" height="1" fill="#c23222"/><rect x="20" y="20" width="1" height="1" fill="#cc5038"/><rect x="23" y="38" width="1" height="1" fill="#c8402e"/><rect x="32" y="12" width="1" height="1" fill="#c84a30"/><rect x="10" y="15" width="1" height="1" fill="#c84a30"/><rect x="4" y="2" width="1" height="1" fill="#cc5038"/><rect x="35" y="34" width="1" height="1" fill="#ecc0b0"/><rect x="10" y="27" width="1" height="1" fill="#c8402e"/><rect x="4" y="16" width="1" height="1" fill="#c43a28"/><rect x="5" y="13" width="1" height="1" fill="#c8402e"/><rect x="26" y="31" width="1" height="1" fill="#cc5038"/><rect x="11" y="14" width="1" height="1" fill="#e09a84"/><rect x="26" y="29" width="1" height="1" fill="#c43a28"/><rect x="15" y="34" width="1" height="1" fill="#c8402e"/><rect x="18" y="18" width="1" height="1" fill="#d87a62"/><rect x="36" y="17" width="1" height="1" fill="#ecc0b0"/><rect x="16" y="16" width="1" height="1" fill="#c23222"/><rect x="28" y="15" width="1" height="1" fill="#e09a84"/><rect x="15" y="15" width="1" height="1" fill="#e09a84"/><rect x="18" y="37" width="1" height="1" fill="#c23222"/><rect x="20" y="4" width="1" height="1" fill="#c84a30"/><rect x="16" y="15" width="1" height="1" fill="#be2a1c"/><rect x="33" y="14" width="1" height="1" fill="#c8402e"/><rect x="29" y="2" width="1" height="1" fill="#c8402e"/><rect x="0" y="30" width="1" height="1" fill="#c23222"/><rect x="28" y="23" width="1" height="1" fill="#d0604a"/><rect x="18" y="14" width="1" height="1" fill="#c8402e"/><rect x="3" y="12" width="1" height="1" fill="#c43a28"/><rect x="37" y="12" width="1" height="1" fill="#c8402e"/><rect x="23" y="32" width="1" height="1" fill="#e09a84"/><rect x="28" y="38" width="1" height="1" fill="#d87a62"/><rect x="0" y="6" width="1" height="1" fill="#c43a28"/><rect x="39" y="22" width="1" height="1" fill="#c23222"/><rect x="2" y="23" width="1" height="1" fill="#ecc0b0"/><rect x="9" y="2" width="1" height="1" fill="#c23222"/><rect x="16" y="2" width="1" height="1" fill="#c43a28"/><rect x="13" y="0" width="1" height="1" fill="#ecc0b0"/><rect x="26" y="23" width="1" height="1" fill="#e09a84"/><rect x="39" y="19" width="1" height="1" fill="#c8402e"/><rect x="13" y="2" width="1" height="1" fill="#cc5038"/><rect x="35" y="30" width="1" height="1" fill="#c8402e"/><rect x="26" y="6" width="1" height="1" fill="#c84a30"/><rect x="35" y="9" width="1" height="1" fill="#be2a1c"/><rect x="5" y="10" width="1" height="1" fill="#c84a30"/><rect x="17" y="26" width="1" height="1" fill="#d87a62"/><rect x="19" y="26" width="1" height="1" fill="#d0604a"/><rect x="19" y="36" width="1" height="1" fill="#ecc0b0"/><rect x="26" y="26" width="1" height="1" fill="#d0604a"/><rect x="23" y="12" width="1" height="1" fill="#c84a30"/><rect x="25" y="13" width="1" height="1" fill="#d0604a"/><rect x="27" y="10" width="1" height="1" fill="#c84a30"/><rect x="7" y="5" width="1" height="1" fill="#c84a30"/><rect x="36" y="23" width="1" height="1" fill="#cc5038"/><rect x="10" y="8" width="1" height="1" fill="#d0604a"/><rect x="3" y="35" width="1" height="1" fill="#e09a84"/><rect x="25" y="5" width="1" height="1" fill="#c43a28"/><rect x="39" y="23" width="1" height="1" fill="#be2a1c"/><rect x="10" y="9" width="1" height="1" fill="#ecc0b0"/><rect x="18" y="10" width="1" height="1" fill="#be2a1c"/><rect x="10" y="4" width="1" height="1" fill="#c8402e"/><rect x="24" y="31" width="1" height="1" fill="#c23222"/><rect x="19" y="8" width="1" height="1" fill="#d0604a"/><rect x="30" y="20" width="1" height="1" fill="#d0604a"/><rect x="38" y="24" width="1" height="1" fill="#c8402e"/><rect x="39" y="10" width="1" height="1" fill="#c23222"/><rect x="39" y="25" width="1" height="1" fill="#c43a28"/><rect x="12" y="30" width="1" height="1" fill="#e09a84"/><rect x="36" y="13" width="1" height="1" fill="#d0604a"/><rect x="25" y="33" width="1" height="1" fill="#e09a84"/><rect x="24" y="22" width="1" height="1" fill="#c8402e"/><rect x="9" y="15" width="1" height="1" fill="#c23222"/><rect x="2" y="35" width="1" height="1" fill="#d0604a"/><rect x="20" y="7" width="1" height="1" fill="#c84a30"/><rect x="38" y="29" width="1" height="1" fill="#be2a1c"/><rect x="19" y="26" width="1" height="1" fill="#d87a62"/><rect x="37" y="15" width="1" height="1" fill="#c84a30"/><rect x="24" y="23" width="1" height="1" fill="#cc5038"/><rect x="32" y="28" width="1" height="1" fill="#e09a84"/><rect x="1" y="0" width="1" height="1" fill="#c43a28"/><rect x="31" y="29" width="1" height="1" fill="#c23222"/></pattern></defs><g fill="url(#sp)"><circle cx="432" cy="386.6" r="6.50"/><circle cx="447" cy="385.4" r="5.50"/><circle cx="419" cy="392" r="6.50"/><circle cx="436" cy="400" r="5.80"/><circle cx="448.4" cy="397.8" r="5.50"/><circle cx="408" cy="404" r="6.80"/><circle cx="424.4" cy="406.6" r="6.00"/><circle cx="401" cy="418.7" r="7.00"/><circle cx="415.6" cy="417.4" r="6.00"/><circle cx="382.4" cy="409.4" r="9.00"/><circle cx="361.6" cy="407" r="9.00"/><ellipse cx="342.6" cy="412.4" rx="7.80" ry="7.00"/><circle cx="326.2" cy="420" r="7.50"/><ellipse cx="309.6" cy="413.8" rx="7.50" ry="6.20"/><ellipse cx="290.8" cy="420" rx="9.70" ry="9.00"/><circle cx="310.6" cy="429.4" r="7.50"/><circle cx="273" cy="433.4" r="8.80"/><circle cx="293" cy="440.6" r="10.00"/><circle cx="267.4" cy="452.6" r="7.20"/><ellipse cx="284" cy="457.4" rx="7.80" ry="6.80"/><circle cx="271.4" cy="472" r="9.50"/><circle cx="266.6" cy="490.6" r="7.50"/><circle cx="260" cy="506.6" r="7.80"/><circle cx="248" cy="521.4" r="6.20"/><circle cx="262" cy="521" r="5.80"/><circle cx="245.2" cy="536.5" r="7.20"/><circle cx="260" cy="534.4" r="5.80"/><circle cx="260" cy="547.5" r="6.00"/><circle cx="245.6" cy="553.6" r="7.50"/><circle cx="261.6" cy="563.4" r="7.20"/><ellipse cx="249.4" cy="570.6" rx="5.75" ry="7.50"/><circle cx="270" cy="578.4" r="6.80"/><circle cx="257.6" cy="586" r="6.50"/><circle cx="282.4" cy="588.6" r="6.80"/><circle cx="270.4" cy="596.4" r="6.00"/><circle cx="297" cy="593.6" r="6.20"/><circle cx="284.4" cy="601.6" r="6.20"/><circle cx="445" cy="429.4" r="7.80"/><circle cx="426" cy="432" r="8.50"/><circle cx="411" cy="430" r="5.80"/><circle cx="398" cy="433.4" r="5.50"/><circle cx="411.6" cy="444.8" r="8.50"/><circle cx="397" cy="445.6" r="4.50"/><circle cx="404.5" cy="456.3" r="7.30"/><circle cx="407" cy="463.3" r="6.00"/><circle cx="389" cy="459.4" r="7.00"/><circle cx="374" cy="450.6" r="8.80"/><circle cx="357.4" cy="458.2" r="7.50"/><circle cx="339.6" cy="462.5" r="7.50"/><circle cx="349.4" cy="473.6" r="5.50"/><circle cx="323" cy="471.8" r="8.80"/><ellipse cx="337.4" cy="480.4" rx="5.50" ry="6.50"/><circle cx="307" cy="483" r="8.00"/><circle cx="323.4" cy="490.6" r="8.50"/><circle cx="303" cy="502" r="7.20"/><circle cx="317.6" cy="510" r="7.80"/><circle cx="304" cy="520" r="7.00"/><ellipse cx="316" cy="528.4" rx="6.00" ry="5.20"/><circle cx="302.4" cy="536" r="5.50"/><circle cx="315.4" cy="542.2" r="5.50"/><circle cx="302" cy="551" r="7.20"/><circle cx="317.6" cy="556.4" r="6.50"/><circle cx="308.4" cy="567.4" r="6.50"/><circle cx="324" cy="571.6" r="6.80"/><circle cx="339" cy="572.4" r="5.50"/><circle cx="350" cy="571.4" r="5.80"/><circle cx="336.6" cy="581" r="7.50"/><circle cx="324.4" cy="591.4" r="7.50"/><circle cx="314.6" cy="605.2" r="8.50"/><circle cx="309.5" cy="621.6" r="8.50"/><circle cx="310" cy="640" r="8.00"/><circle cx="321" cy="650.6" r="4.80"/><circle cx="311.4" cy="657.4" r="5.50"/><circle cx="328.6" cy="661" r="6.00"/><circle cx="320" cy="670" r="5.50"/><circle cx="342" cy="668.2" r="7.00"/><circle cx="332.5" cy="678.2" r="6.50"/><circle cx="357.4" cy="672.2" r="7.50"/><circle cx="347" cy="684.5" r="6.80"/><circle cx="373.4" cy="674.8" r="7.20"/><circle cx="363" cy="689.4" r="7.75"/><circle cx="383.6" cy="686.2" r="6.50"/><circle cx="376" cy="699.2" r="7.25"/><circle cx="396" cy="692.5" r="6.20"/><circle cx="391" cy="705.4" r="6.80"/><circle cx="410.5" cy="695" r="6.50"/><circle cx="406.6" cy="708.6" r="7.20"/><circle cx="423.4" cy="692" r="5.50"/><circle cx="423" cy="705" r="7.00"/><circle cx="434.2" cy="687" r="5.50"/><circle cx="437" cy="698.2" r="5.80"/><circle cx="443.5" cy="680.2" r="5.50"/><circle cx="448" cy="689.2" r="5.80"/><circle cx="458.5" cy="675.4" r="8.00"/><circle cx="472.6" cy="664" r="8.25"/><circle cx="488.4" cy="651.2" r="9.50"/><circle cx="505" cy="643" r="6.00"/><circle cx="495.6" cy="633" r="6.50"/><ellipse cx="513.8" cy="631" rx="5.00" ry="6.25"/><circle cx="503" cy="620" r="6.80"/><ellipse cx="516.8" cy="617.4" rx="4.75" ry="6.25"/><circle cx="503" cy="606" r="5.80"/><circle cx="515" cy="603.3" r="5.80"/><circle cx="500" cy="595" r="5.50"/><circle cx="363" cy="594.5" r="6.80"/><circle cx="362.4" cy="610.2" r="7.30"/><circle cx="371" cy="624.5" r="7.80"/><circle cx="385.4" cy="633" r="7.10"/><circle cx="399.5" cy="636.6" r="5.50"/><circle cx="412.6" cy="638.6" r="6.50"/><circle cx="430" cy="639.7" r="8.20"/><circle cx="445.2" cy="629.5" r="5.80"/><circle cx="446.2" cy="643.4" r="6.00"/><circle cx="456.6" cy="623" r="5.80"/><ellipse cx="459" cy="638" rx="4.50" ry="6.00"/><ellipse cx="467.2" cy="626.4" rx="4.50" ry="6.00"/><circle cx="469.6" cy="610" r="7.50"/><circle cx="481" cy="595.6" r="8.80"/><circle cx="496" cy="573" r="8.50"/><circle cx="488" cy="580.5" r="7.00"/><circle cx="479.6" cy="568" r="6.80"/><circle cx="465.4" cy="564" r="6.20"/><ellipse cx="453" cy="557" rx="5.80" ry="7.20"/><circle cx="514.6" cy="572.5" r="6.50"/><circle cx="530" cy="571.3" r="6.50"/><ellipse cx="512" cy="584.4" rx="7.00" ry="6.00"/><ellipse cx="529" cy="584.4" rx="7.75" ry="6.25"/><ellipse cx="548" cy="578.2" rx="7.75" ry="6.50"/><circle cx="546" cy="563" r="8.00"/><ellipse cx="561" cy="565.8" rx="5.75" ry="7.25"/><circle cx="552" cy="544.5" r="8.00"/><ellipse cx="566.4" cy="548.2" rx="6.00" ry="8.00"/><circle cx="549.6" cy="529" r="6.20"/><ellipse cx="562.5" cy="530.2" rx="6.00" ry="6.75"/><circle cx="545.4" cy="514.6" r="6.00"/><ellipse cx="556.8" cy="514.2" rx="5.50" ry="6.00"/><circle cx="545.6" cy="499" r="7.50"/><circle cx="541" cy="480.4" r="7.20"/><ellipse cx="544.4" cy="463.6" rx="4.30" ry="5.50"/><circle cx="533" cy="466.6" r="5.80"/><circle cx="541" cy="449.2" r="6.20"/><circle cx="527.6" cy="453" r="6.50"/><circle cx="532" cy="434" r="6.80"/><circle cx="518.6" cy="440.4" r="6.50"/><circle cx="518.6" cy="423" r="6.20"/><circle cx="508.4" cy="430.4" r="5.50"/><circle cx="501.4" cy="415.6" r="9.00"/><circle cx="482.6" cy="405" r="8.50"/><circle cx="464" cy="395.4" r="7.80"/><circle cx="461" cy="436.4" r="6.80"/><circle cx="473.4" cy="444.6" r="6.50"/><circle cx="488.4" cy="449" r="7.20"/><circle cx="503.4" cy="456.4" r="7.50"/><circle cx="512.6" cy="471" r="7.80"/><circle cx="514.6" cy="488.6" r="8.20"/><circle cx="512.4" cy="506.6" r="8.20"/><circle cx="507" cy="524" r="8.00"/><circle cx="497.4" cy="539.8" r="7.50"/><circle cx="484" cy="550.4" r="7.20"/></g></svg><div id="dlg" class="abs"><div class="abs tbar"></div><div class="abs ttl">计算圆形宝石数量</div><div id="cls" class="abs"><svg width="29" height="15" viewBox="0 0 29 15" style="position:absolute;left:0;top:0"><path d="M11.7 5 L17.3 9.6 M17.3 5 L11.7 9.6" stroke="#5c5f6e" stroke-width="3.8" stroke-linecap="square"/><path d="M11.7 5 L17.3 9.6 M17.3 5 L11.7 9.6" stroke="#fff" stroke-width="2.2" stroke-linecap="square"/></svg></div><div class="abs fl"></div><div class="abs fr"></div><div class="abs fr2"></div><div class="abs foot"></div><div class="abs fb"></div><div class="t" style="left:14px;top:55px">宝石</div><div class="t" style="left:126px;top:55px">直径</div><div class="t" style="left:238px;top:55px">数目</div><div class="t" style="left:14px;top:89px">GAMET</div><div class="t" style="left:142px;top:89px">0.90</div><div class="t" style="left:229px;top:89px;width:40px;text-align:center">2</div><div class="t" style="left:14px;top:106px">GAMET</div><div class="t" style="left:142px;top:106px">1.00</div><div class="t" style="left:229px;top:106px;width:40px;text-align:center">5</div><div class="t" style="left:14px;top:123px">GAMET</div><div class="t" style="left:142px;top:123px">1.10</div><div class="t" style="left:229px;top:123px;width:40px;text-align:center">25</div><div class="t" style="left:14px;top:140px">GAMET</div><div class="t" style="left:142px;top:140px">1.20</div><div class="t" style="left:229px;top:140px;width:40px;text-align:center">36</div><div class="t" style="left:14px;top:157px">GAMET</div><div class="t" style="left:142px;top:157px">1.30</div><div class="t" style="left:229px;top:157px;width:40px;text-align:center">20</div><div class="t" style="left:14px;top:174px">GAMET</div><div class="t" style="left:142px;top:174px">1.40</div><div class="t" style="left:229px;top:174px;width:40px;text-align:center">31</div><div class="t" style="left:14px;top:191px">GAMET</div><div class="t" style="left:142px;top:191px">1.50</div><div class="t" style="left:229px;top:191px;width:40px;text-align:center">23</div><div class="t" style="left:14px;top:208px">GAMET</div><div class="t" style="left:142px;top:208px">1.60</div><div class="t" style="left:229px;top:208px;width:40px;text-align:center">9</div><div class="t" style="left:14px;top:225px">GAMET</div><div class="t" style="left:142px;top:225px">1.70</div><div class="t" style="left:229px;top:225px;width:40px;text-align:center">7</div><div class="t" style="left:14px;top:242px">GAMET</div><div class="t" style="left:142px;top:242px">1.80</div><div class="t" style="left:229px;top:242px;width:40px;text-align:center">3</div><div id="ok" class="abs"><div class="abs in"></div><div class="abs in2"></div><div class="abs foc"></div><div class="abs lbl">确定</div></div></div>
</body></html>
